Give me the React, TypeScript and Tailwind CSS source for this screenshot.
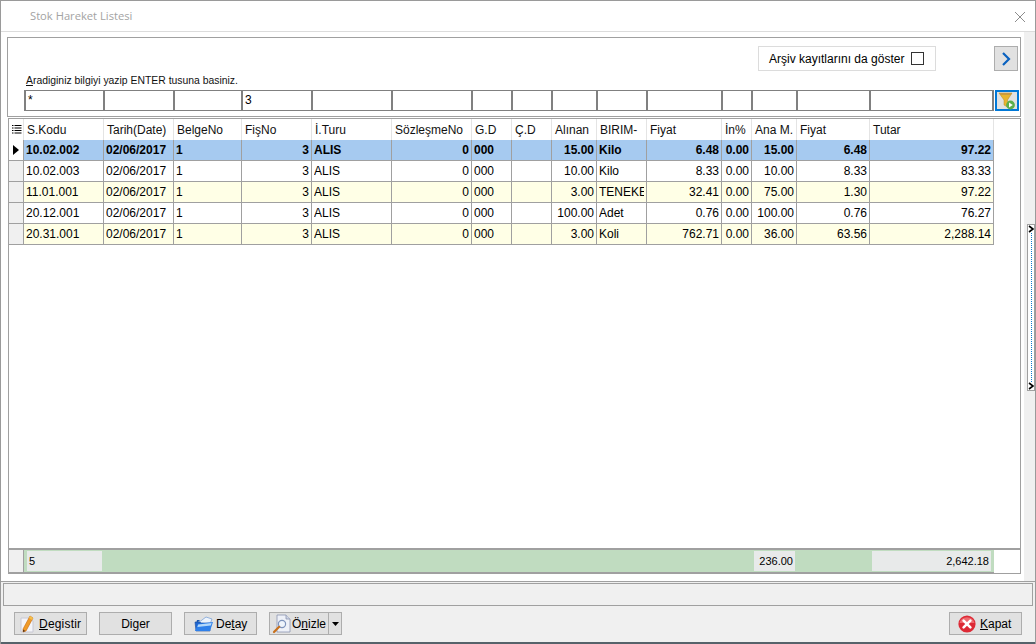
const columns = [
  { title: "S.Kodu", width: "w-[80px]" },
  { title: "Tarih(Date)", width: "w-[70px]" },
  { title: "BelgeNo", width: "w-[68px]" },
  { title: "FişNo", width: "w-[70px]", right: true },
  { title: "İ.Turu", width: "w-[80px]" },
  { title: "SözleşmeNo", width: "w-[80px]", right: true },
  { title: "G.D", width: "w-[40px]" },
  { title: "Ç.D", width: "w-[40px]" },
  { title: "Alınan", width: "w-[45px]", right: true },
  { title: "BIRIM-", width: "w-[50px]" },
  { title: "Fiyat", width: "w-[75px]", right: true },
  { title: "İn%", width: "w-[30px]", right: true },
  { title: "Ana M.", width: "w-[45px]", right: true },
  { title: "Fiyat", width: "w-[73px]", right: true },
  { title: "Tutar", width: "w-[124px]", right: true },
];

const rows = [
  ["10.02.002", "02/06/2017", "1", "3", "ALIS", "0", "000", "", "15.00", "Kilo", "6.48", "0.00", "15.00", "6.48", "97.22"],
  ["10.02.003", "02/06/2017", "1", "3", "ALIS", "0", "000", "", "10.00", "Kilo", "8.33", "0.00", "10.00", "8.33", "83.33"],
  ["11.01.001", "02/06/2017", "1", "3", "ALIS", "0", "000", "", "3.00", "TENEKE", "32.41", "0.00", "75.00", "1.30", "97.22"],
  ["20.12.001", "02/06/2017", "1", "3", "ALIS", "0", "000", "", "100.00", "Adet", "0.76", "0.00", "100.00", "0.76", "76.27"],
  ["20.31.001", "02/06/2017", "1", "3", "ALIS", "0", "000", "", "3.00", "Koli", "762.71", "0.00", "36.00", "63.56", "2,288.14"],
];

function PencilIcon() {
  return (
    <svg width="18" height="20" viewBox="0 0 18 20">
      <path d="M2 4h8l4 3v11H2z" fill="#f4f4f8" stroke="#c8c8d4" />
      <path d="M4 15 L11 2 L14 4 L7 17 L4 18z" fill="#f09a28" stroke="#c86a10" strokeWidth="0.6" />
      <path d="M11 2 L14 4 L13 6 L10 4z" fill="#f3c04c" />
      <path d="M4 15.5 L6.5 17 L4 18z" fill="#5a3a20" />
    </svg>
  );
}

function FolderIcon() {
  return (
    <svg width="20" height="16" viewBox="0 0 20 16">
      <path d="M2 8 L3 4 L6 4 L7 3 L2 8z" fill="#1c58b0" />
      <path d="M4 7 L12 1 L18 3 L16 8z" fill="#eef4fc" stroke="#6f9ad4" strokeWidth="0.7" />
      <path d="M1 6h5l1 1h9v8H2z" fill="#1f66d0" stroke="#164a9c" strokeWidth="0.6" />
      <path d="M4 8 L19 6 L16 15 L1 15z" fill="#2f80ea" />
      <path d="M4.2 8.6 L17.6 7 L16.8 9.4 L3.4 11z" fill="#b4d8fa" />
    </svg>
  );
}

function PreviewIcon() {
  return (
    <svg width="20" height="20" viewBox="0 0 20 20">
      <path d="M5 1h9l4 4v13H5z" fill="#eef1f8" stroke="#8a94b0" strokeWidth="0.8" />
      <path d="M14 1v4h4" fill="#cfd6e6" stroke="#8a94b0" strokeWidth="0.8" />
      <circle cx="10" cy="10" r="3.6" fill="#eef4fc" stroke="#7d93bc" strokeWidth="1.2" />
      <path d="M7.2 12.8 L2 18" stroke="#c8701c" strokeWidth="2.2" strokeLinecap="round" />
    </svg>
  );
}

function CloseCircleIcon() {
  return (
    <svg width="18" height="18" viewBox="0 0 18 18">
      <circle cx="9" cy="9" r="8.6" fill="#dd2a36" />
      <path d="M1.5 8a7.6 7 0 0 1 15 0z" fill="#ee6a70" />
      <path d="M5.6 5.6 L12.4 12.4 M12.4 5.6 L5.6 12.4" stroke="#fff" strokeWidth="2.6" strokeLinecap="round" />
    </svg>
  );
}

function FunnelIcon() {
  return (
    <svg width="18" height="18" viewBox="0 0 18 18">
      <path d="M1 1h13L9.5 8v7L6 13V8z" fill="#e8b530" stroke="#b98a20" strokeWidth="0.5" />
      <path d="M1 1h13l-1 2H2.5z" fill="#c99a40" />
      <circle cx="12.5" cy="13" r="4.4" fill="#5cae4c" />
      <path d="M11 10.6v4.8l3.8-2.4z" fill="#fff" />
    </svg>
  );
}

function Btn({ children, className }: { children: React.ReactNode; className: string }) {
  return (
    <button className={`flex h-[23px] items-center border border-[#adadad] bg-[#e1e1e1] text-[12px] text-black ${className}`}>
      {children}
    </button>
  );
}

export default function App() {
  return (
    <div className="relative flex h-[644px] w-[1036px] flex-col overflow-hidden border-x border-t border-[#9a9a9a] bg-white font-['Liberation_Sans',sans-serif] text-[12px] text-black">
      <div className="flex h-[31px] shrink-0 items-center justify-between border-b border-[#dcdcdc] pl-[29px] pr-[9px] pt-[1px]">
        <span className="font-['Open_Sans',sans-serif] text-[11.2px] text-[#a3a3a3]">Stok Hareket Listesi</span>
        <svg width="12" height="12" viewBox="0 0 12 12">
          <path d="M1 1 L11 11 M11 1 L1 11" stroke="#8c8c8c" strokeWidth="1" />
        </svg>
      </div>

      <div className="flex min-h-0 flex-1">
        <div className="w-[1023px] shrink-0 pl-[6px] pt-[5px]">
          <div className="h-[80px] w-[1014px] border border-[#a0a0a0] pl-[16px] pt-[8px]">
            <div className="flex h-[25px] justify-end">
              <div className="mr-[58px] flex w-[178px] items-center border border-[#dcdcdc] pl-[10px]">
                <span>Arşiv kayıtlarını da göster</span>
                <span className="ml-[7px] h-[13px] w-[13px] border border-[#333333]" />
              </div>
              <div className="mr-[2px] flex w-[24px] items-center justify-center border border-[#adadad] bg-[#e1e1e1]">
                <svg width="10" height="14" viewBox="0 0 10 14">
                  <path d="M2 1 L8 7 L2 13" fill="none" stroke="#0a62c0" strokeWidth="2.2" />
                </svg>
              </div>
            </div>
            <div className="mt-[2px] h-[17px] pl-[2px] text-[10.4px] leading-[16px] text-[#111111]">
              <u>A</u>radiginiz bilgiyi yazip ENTER tusuna basiniz.
            </div>
            <div className="flex h-[21px] items-stretch">
              {columns.map((col, i) => (
                <div
                  key={i}
                  className={`${i === 0 ? "w-[81px] border-l-2" : i === 14 ? "w-[123px]" : col.width} shrink-0 border-y border-r-2 border-[#808080] pl-[2px] text-[12px] leading-[19px]`}
                >
                  {i === 0 ? "*" : i === 3 ? "3" : ""}
                </div>
              ))}
              <div className="ml-[1px] flex w-[24px] shrink-0 items-center justify-center border-2 border-[#0078d7] bg-[#e1e1e1]">
                <FunnelIcon />
              </div>
            </div>
          </div>

          <div className="ml-[1px] mt-[1px] flex h-[456px] w-[1013px] flex-col border border-[#a0a0a0]">
            <div className="flex h-[21px] shrink-0">
              <div className="flex w-[15px] shrink-0 items-center justify-center border-r border-[#e4e4e4]">
                <svg width="11" height="11" viewBox="0 0 11 11">
                  <path d="M1 1.5h1.5M3.5 1.5h7M1 4h1.5M3.5 4h7M1 6.5h1.5M3.5 6.5h7M1 9h1.5M3.5 9h7" stroke="#000" strokeWidth="1.2" />
                </svg>
              </div>
              {columns.map((col, i) => (
                <div key={i} className={`${col.width} shrink-0 border-r border-[#e4e4e4] pl-[3px] pt-[1px] leading-[20px] text-[#111111]`}>
                  {col.title}
                </div>
              ))}
            </div>

            <div className="min-h-0 flex-1">
              {rows.map((row, r) => (
                <div key={r} className="flex h-[21px]">
                  <div className={`flex w-[15px] shrink-0 items-center justify-center border-b border-r border-[#a0a0a0] ${r === 0 ? "bg-white" : "bg-[#f0f0f0]"}`}>
                    {r === 0 && (
                      <svg width="6" height="10" viewBox="0 0 6 10">
                        <path d="M0 0 L6 5 L0 10z" fill="#000" />
                      </svg>
                    )}
                  </div>
                  {row.map((value, c) => (
                    <div
                      key={c}
                      className={`${columns[c].width} shrink-0 overflow-hidden whitespace-nowrap border-b border-r border-[#a0a0a0] px-[2px] leading-[20px] ${columns[c].right ? "text-right" : "text-left"} ${r === 0 ? "bg-[#a6caf0] font-bold" : r % 2 === 0 ? "bg-[#ffffe6]" : "bg-white"}`}
                    >
                      <div className="overflow-hidden">{value}</div>
                    </div>
                  ))}
                </div>
              ))}
            </div>

            <div className="flex h-[25px] shrink-0 border-t-2 border-[#a0a0a0]">
              <div className="w-[15px] shrink-0 border-b border-r border-[#a0a0a0] bg-[#f0f0f0]" />
              <div className="flex w-[970px] shrink-0 items-stretch border-b border-[#a0a0a0] bg-[#c0dcc0] py-[1px] pl-[3px] pr-[2px] text-[11px] leading-[20px]">
                <div className="w-[75px] bg-[#e8eaea] pl-[2px]">5</div>
                <div className="w-[652px]" />
                <div className="w-[41px] bg-[#e8eaea] pr-[2px] text-right">236.00</div>
                <div className="w-[77px]" />
                <div className="w-[119px] bg-[#e8eaea] pr-[2px] text-right">2,642.18</div>
              </div>
            </div>
          </div>
        </div>
        <div className="flex-1 bg-[#f0f0f0]" />
      </div>

      <div className="h-[63px] shrink-0 border-b-2 border-t border-b-[#56626a] border-t-[#a0a0a0] bg-[#f0f0f0] pl-[2px] pt-[1px]">
        <div className="h-[23px] w-[1030px] border border-[#a0a0a0]" />
        <div className="mt-[6px] flex pl-[11px] pr-[13px]">
          <Btn className="w-[73px] pl-[4px]">
            <PencilIcon />
            <span className="ml-[2px] tracking-[0.2px]"><u>D</u>egistir</span>
          </Btn>
          <Btn className="ml-[12px] w-[73px] justify-center">
            <span>Di<u>g</u>er</span>
          </Btn>
          <Btn className="ml-[12px] w-[73px] pl-[9px]">
            <FolderIcon />
            <span className="ml-[2px]">De<u>t</u>ay</span>
          </Btn>
          <Btn className="ml-[12px] w-[60px] pl-[2px]">
            <PreviewIcon />
            <span>Ö<u>n</u>izle</span>
          </Btn>
          <Btn className="w-[13px] justify-center border-l-0">
            <svg width="7" height="4" viewBox="0 0 7 4">
              <path d="M0 0h7L3.5 4z" fill="#000" />
            </svg>
          </Btn>
          <Btn className="ml-auto w-[73px] pl-[8px]">
            <CloseCircleIcon />
            <span className="ml-[4px]"><u>K</u>apat</span>
          </Btn>
        </div>
      </div>

      <div className="absolute left-[1026px] top-[223px] flex h-[167px] w-[8px] flex-col items-center justify-between border border-[#a0a0a0] bg-white">
        <svg width="6" height="8" viewBox="0 0 6 8"><path d="M1 1 L5 4 L1 7" fill="none" stroke="#000" strokeWidth="1.6" /></svg>
        <div className="flex-1 border-l border-dotted border-[#0a78d0]" />
        <svg width="6" height="8" viewBox="0 0 6 8"><path d="M1 1 L5 4 L1 7" fill="none" stroke="#000" strokeWidth="1.6" /></svg>
      </div>
    </div>
  );
}
